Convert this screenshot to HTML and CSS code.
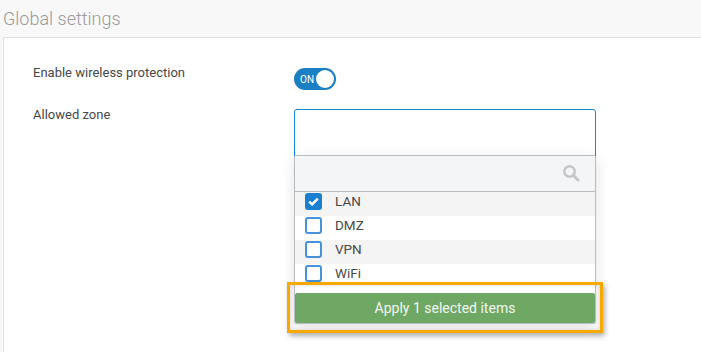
FILE: index.html
```html
<!DOCTYPE html>
<html lang="en">
<head>
    <meta charset="UTF-8">
    <title>Global settings</title>
    <link rel="stylesheet" href="styles.css">
</head>
<body>
    <h2 class="title">Global settings</h2>

    <div class="panel">
        <div class="form-row">
            <label class="form-label">Enable wireless protection</label>
            <div class="control">
                <div class="toggle">
                    <span class="toggle-text">ON</span>
                    <span class="knob"></span>
                </div>
            </div>
        </div>

        <div class="form-row">
            <label class="form-label">Allowed zone</label>
            <div class="control">
                <div class="select-box"></div>

                <!-- dropdown menu -->
                <div class="dropdown">
                    <div class="search-row">
                        <svg class="search-icon" width="18" height="18" viewBox="0 0 18 18">
                            <circle cx="7.5" cy="7.5" r="5.2" fill="none" stroke="#c6c6c6" stroke-width="2.6"/>
                            <line x1="11.3" y1="11.3" x2="16" y2="16" stroke="#c6c6c6" stroke-width="3" stroke-linecap="round"/>
                        </svg>
                    </div>
                    <div class="option shaded">
                        <span class="checkbox checked">
                            <svg width="11" height="9" viewBox="0 0 11 9"><path d="M1.2 4.6 L4.1 7.4 L9.8 1.6" fill="none" stroke="#fff" stroke-width="2.4"/></svg>
                        </span>
                        LAN
                    </div>
                    <div class="option"><span class="checkbox"></span>DMZ</div>
                    <div class="option shaded"><span class="checkbox"></span>VPN</div>
                    <div class="option"><span class="checkbox"></span>WiFi</div>
                    <div class="footer">
                        <button class="apply-btn">Apply 1 selected items</button>
                        <div class="highlight"></div>
                    </div>
                </div>
            </div>
        </div>
    </div>
</body>
</html>
```

FILE: styles.css
```css
body {
    margin: 0;
    background-color: #f8f8f8;
    font-family: Roboto, "Liberation Sans", sans-serif;
    color: #474747;
    overflow: hidden;
    height: 352px;
}
.title {
    margin: 0 0 7px 3px;
    padding-top: 8px;
    font-size: 18px;
    line-height: 22px;
    font-weight: 300;
    color: #9a9a9a;
}
.panel {
    margin-left: 3px;
    height: 315px;
    background-color: white;
    border: 1px solid #e0e0e0;
    border-right: none;
    border-bottom: none;
    padding: 27px 0 0 29px;
    box-sizing: border-box;
}
.form-row {
    display: grid;
    grid-template-columns: 261px 302px;
    margin-bottom: 17px;
}
.form-label {
    font-size: 13px;
    line-height: 16px;
    color: #474747;
}
.control {
    position: relative;
}
.toggle {
    margin-top: 3px;
    width: 42px;
    height: 22px;
    border-radius: 11px;
    background-color: #1b7fc4;
    display: flex;
    align-items: center;
    justify-content: space-between;
    padding: 0 2px 0 6px;
    box-sizing: border-box;
}
.toggle-text {
    font-size: 10px;
    color: white;
}
.knob {
    width: 18px;
    height: 18px;
    border-radius: 50%;
    background-color: white;
}
.select-box {
    margin-top: 2px;
    height: 60px;
    border: 1px solid #1a85d0;
    border-radius: 3px;
    background-color: white;
}
.dropdown {
    position: absolute;
    top: 48px;
    left: 0;
    width: 302px;
    background-color: white;
    border: 1px solid #b6bcc2;
    border-radius: 2px;
    box-sizing: border-box;
    box-shadow: 0 4px 14px rgba(0,0,0,0.12);
}
.search-row {
    height: 35px;
    background-color: #f4f5f7;
    border-bottom: 1px solid #b6bcc2;
    display: flex;
    align-items: center;
    justify-content: flex-end;
    padding-right: 15px;
}
.search-icon {
    margin-top: -2px;
}
.option {
    height: 24px;
    display: flex;
    align-items: flex-start;
    padding: 1px 0 0 10px;
    box-sizing: border-box;
    font-size: 13.5px;
    line-height: 17px;
    color: #4a4a4a;
}
.option.shaded {
    background-color: #f4f4f4;
}
.checkbox {
    width: 17px;
    height: 17px;
    border: 2px solid #4592d9;
    border-radius: 3px;
    box-sizing: border-box;
    background-color: white;
    margin-right: 13px;
    display: flex;
    align-items: center;
    justify-content: center;
}
.checkbox.checked {
    background-color: #1a7fd0;
    border-color: #1a7fd0;
}
.footer {
    position: relative;
    padding-top: 5px;
}
.apply-btn {
    display: block;
    width: 100%;
    height: 30px;
    border: none;
    border-radius: 2px;
    background-color: #6ea864;
    color: #f3f6f2;
    font-family: Roboto, "Liberation Sans", sans-serif;
    font-size: 14px;
}
.highlight {
    position: absolute;
    top: -6px;
    bottom: -10px;
    left: -8px;
    right: -8px;
    border: 3px solid #f7a900;
    box-shadow: 2px 3px 5px rgba(0,0,0,0.3), inset 0 0 4px rgba(0,0,0,0.15);
}
```
